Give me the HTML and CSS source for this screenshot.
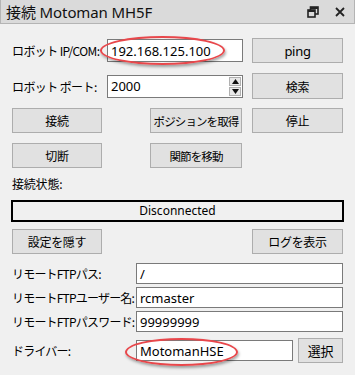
FILE: index.html
```html
<!DOCTYPE html>
<html lang="ja">
<head>
  <meta charset="UTF-8" />
  <title>接続 Motoman MH5F</title>
  <link rel="stylesheet" href="styles.css">
</head>
<body>
  <div class="window">
    <div class="titlebar">
      <span class="title">接続 Motoman MH5F</span>
      <span class="tb-icons">
        <svg width="12" height="12" viewBox="0 0 12 12">
          <rect x="3.5" y="1" width="7.5" height="7" fill="none" stroke="#222" stroke-width="1.6"/>
          <rect x="1" y="4" width="7" height="7" fill="#dadada" stroke="#222" stroke-width="1.6"/>
          <rect x="3.5" y="1" width="7.5" height="2" fill="#222"/>
          <rect x="1" y="4" width="7" height="2" fill="#222"/>
        </svg>
        <svg width="12" height="12" viewBox="0 0 12 12">
          <path d="M2 2 L10 10 M10 2 L2 10" stroke="#222" stroke-width="1.8"/>
        </svg>
      </span>
    </div>

    <div class="content">
      <div class="row r1">
        <label class="lbl">ロボット IP/COM:</label>
        <div class="field wide">192.168.125.100</div>
        <button class="btn right">ping</button>
        <span class="mark mark-ip"></span>
      </div>

      <div class="row r2">
        <label class="lbl">ロボット ポート:</label>
        <div class="field wide spin">
          <span>2000</span>
          <span class="spinner">
            <span class="arrow"><svg width="7" height="5" viewBox="0 0 7 5"><path d="M0 5 L3.5 0 L7 5Z" fill="#111"/></svg></span>
            <span class="arrow"><svg width="7" height="5" viewBox="0 0 7 5"><path d="M0 0 L3.5 5 L7 0Z" fill="#111"/></svg></span>
          </span>
        </div>
        <button class="btn right">検索</button>
      </div>

      <div class="row r3">
        <button class="btn small">接続</button>
        <button class="btn mid">ポジションを取得</button>
        <button class="btn right">停止</button>
      </div>

      <div class="row r4">
        <button class="btn small">切断</button>
        <button class="btn mid">関節を移動</button>
      </div>

      <div class="state-label">接続状態:</div>
      <div class="status">Disconnected</div>

      <div class="row r5">
        <button class="btn small">設定を隠す</button>
        <button class="btn log">ログを表示</button>
      </div>

      <div class="ftp">
        <div class="frow">
          <label class="lbl2">リモートFTPパス:</label>
          <div class="field full">/</div>
        </div>
        <div class="frow">
          <label class="lbl2">リモートFTPユーザー名:</label>
          <div class="field full">rcmaster</div>
        </div>
        <div class="frow">
          <label class="lbl2">リモートFTPパスワード:</label>
          <div class="field full">99999999</div>
        </div>
        <div class="frow driver">
          <label class="lbl2">ドライバー:</label>
          <div class="field drv">MotomanHSE</div>
          <button class="btn pick">選択</button>
          <span class="mark mark-drv"></span>
        </div>
      </div>
    </div>
  </div>
</body>
</html>
```

FILE: styles.css
```css
body {
  margin: 0;
  background: #f0f0f0;
  font-family: "Noto Sans CJK JP", "Noto Sans", sans-serif;
  font-size: 12px;
  color: #000;
}

.window {
  width: 355px;
  height: 375px;
  overflow: hidden;
  position: relative;
}

.titlebar {
  background: #dadada;
  border: 1px solid #b4b4b4;
  border-top: none;
  box-sizing: border-box;
  height: 24px;
  display: flex;
  align-items: center;
  justify-content: space-between;
  padding: 0 8px 0 5px;
}

.title {
  font-family: "Noto Sans", "Noto Sans CJK JP", sans-serif;
  font-size: 15px;
  color: #111;
  letter-spacing: -0.1px;
}

.tb-icons {
  display: flex;
  gap: 15px;
  align-items: center;
}

.content {
  padding: 14px 12px 0 12px;
}

.row {
  display: flex;
  align-items: center;
  position: relative;
}

.lbl {
  width: 95px;
  white-space: nowrap;
  letter-spacing: -0.6px;
}

.field {
  background: #fff;
  border: 1px solid #7a7a7a;
  box-sizing: border-box;
  height: 23px;
  display: flex;
  align-items: center;
  padding-left: 3px;
  font-family: "Noto Sans", sans-serif;
  font-size: 13px;
  color: #000;
}

.field.wide {
  width: 136px;
}

.spin {
  justify-content: space-between;
  padding-right: 1px;
  height: 23px;
}

.spinner {
  display: flex;
  flex-direction: column;
  gap: 1px;
}

.arrow {
  width: 12px;
  height: 9px;
  background: #e8e8e8;
  border: 1px solid #b0b0b0;
  box-sizing: border-box;
  display: flex;
  align-items: center;
  justify-content: center;
}

.btn {
  height: 25px;
  background: #e1e1e1;
  border: 1px solid #adadad;
  box-sizing: border-box;
  font-family: "Noto Sans CJK JP", "Noto Sans", sans-serif;
  font-size: 12px;
  color: #000;
  padding: 0;
  letter-spacing: -0.3px;
  white-space: nowrap;
}

.btn.right {
  width: 91px;
  margin-left: auto;
}

.r1 {
  height: 25px;
}

.r1 .btn {
  font-family: "Noto Sans", sans-serif;
  font-size: 13px;
}

.r2 {
  margin-top: 10px;
  height: 26px;
}

.r2 .btn {
  height: 26px;
}

.r3 {
  margin-top: 9px;
}

.r4 {
  margin-top: 10px;
}

.btn.small {
  width: 90px;
}

.btn.mid {
  width: 92px;
  margin-left: 48px;
  font-size: 11.5px;
  letter-spacing: -0.9px;
}

.state-label {
  margin-top: 7px;
  height: 18px;
  line-height: 18px;
  letter-spacing: -0.2px;
}

.status {
  margin-top: 7px;
  width: 333px;
  height: 22px;
  border: 2px solid #000;
  box-sizing: border-box;
  background: #f0f0f0;
  text-align: center;
  line-height: 18px;
  font-family: "Noto Sans", sans-serif;
  font-size: 12px;
  margin-left: -1px;
}

.r5 {
  margin-top: 7px;
}

.btn.log {
  width: 91px;
  margin-left: auto;
}

.ftp {
  margin-top: 9px;
  display: flex;
  flex-direction: column;
  gap: 3px;
}

.frow {
  display: flex;
  align-items: center;
  position: relative;
  height: 21px;
}

.lbl2 {
  width: 124px;
  white-space: nowrap;
  letter-spacing: -0.8px;
}

.field.full {
  flex: 1;
  height: 21px;
}

.driver {
  margin-top: 3px;
  height: 25px;
}

.field.drv {
  width: 157px;
  height: 21px;
}

.btn.pick {
  width: 45px;
  margin-left: auto;
  font-size: 13px;
}

.mark {
  position: absolute;
  border: 2.5px solid #e8474b;
  border-radius: 50%;
  box-shadow: 1px 2px 3px rgba(0, 0, 0, 0.35);
  pointer-events: none;
}

.mark-ip {
  left: 88px;
  top: -2px;
  width: 121px;
  height: 25px;
}

.mark-drv {
  left: 113px;
  top: 0;
  width: 109px;
  height: 24px;
}
```
